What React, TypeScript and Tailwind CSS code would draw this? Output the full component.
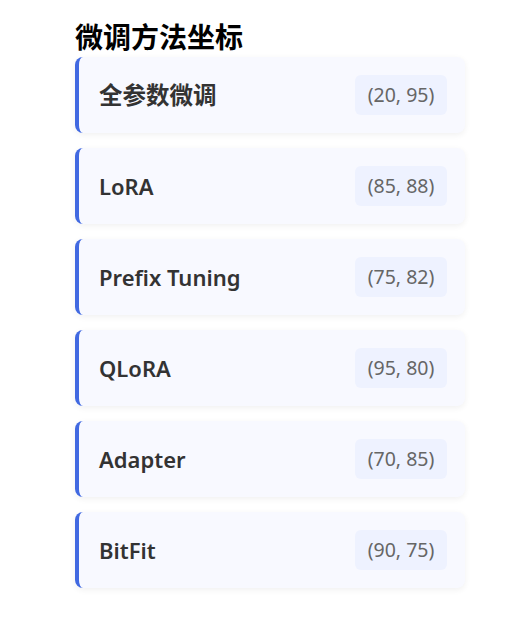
import React from "react";

const items = [
  { name: "全参数微调", coord: "(20, 95)", cjk: true },
  { name: "LoRA", coord: "(85, 88)", cjk: false },
  { name: "Prefix Tuning", coord: "(75, 82)", cjk: false },
  { name: "QLoRA", coord: "(95, 80)", cjk: false },
  { name: "Adapter", coord: "(70, 85)", cjk: false },
  { name: "BitFit", coord: "(90, 75)", cjk: false },
];

export default function App() {
  return (
    <div
      className="w-[528px] h-[641px] bg-white pl-[75px] pt-[20px]"
      style={{ fontFamily: '"Noto Sans", "Noto Sans CJK SC", sans-serif' }}
    >
      <h3 className="text-[28px] font-bold leading-[34px] text-black">微调方法坐标</h3>
      <div className="flex flex-col gap-[15px] w-[390px] mt-[3px]">
        {items.map((it) => (
          <div
            key={it.name}
            className="flex items-center justify-between h-[76px] bg-[#f8f9ff] border-l-4 border-[#4169e1] rounded-lg pl-[20px] pr-[18px] shadow-[0_2px_6px_rgba(0,0,0,0.06)]"
          >
            <span
              className={
                it.cjk
                  ? "text-[23.5px] leading-[30px] font-bold text-[#333]"
                  : "text-[22px] leading-[30px] font-semibold text-[#333]"
              }
            >
              {it.name}
            </span>
            <span className="h-[40px] w-[92px] flex items-center justify-center rounded-md bg-[#eef2ff] text-[19.5px] text-[#666]">
              {it.coord}
            </span>
          </div>
        ))}
      </div>
    </div>
  );
}
